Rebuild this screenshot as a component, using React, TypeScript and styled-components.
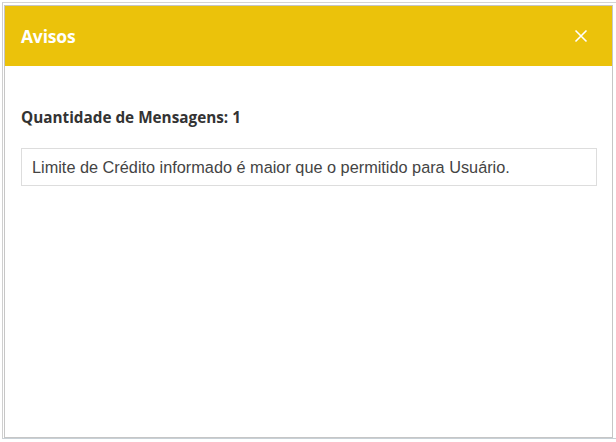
import React from 'react'
import styled, { createGlobalStyle } from 'styled-components'

const GlobalStyle = createGlobalStyle`
  html, body {
    margin: 0;
    padding: 0;
    background: #ffffff;
  }
  body {
    font-family: "Open Sans", "Noto Sans", Arial, sans-serif;
  }
`

const Page = styled.div`
  width: 616px;
  height: 442px;
  padding: 2px 0 0 2px;
  box-sizing: border-box;
  overflow: hidden;
`

const Backdrop = styled.div`
  height: 437px;
  border-top: 1px solid #d4d4d4;
  border-left: 1px solid #cfcfcf;
  border-bottom: 1px solid #c8d0d6;
  box-sizing: border-box;
  padding: 2px 2px 0 1px;
`

const Dialog = styled.div`
  width: 609px;
  height: 433px;
  box-sizing: border-box;
  border: 1px solid #c6c6c6;
  background: #ffffff;
  display: flex;
  flex-direction: column;
`

const Header = styled.div`
  height: 60px;
  flex: none;
  background: #ebc20b;
  display: flex;
  align-items: center;
  justify-content: space-between;
  padding: 0 24px 0 16px;
`

const Title = styled.h2`
  margin: 0;
  color: #ffffff;
  font-size: 17.5px;
  font-weight: 700;
  letter-spacing: -0.2px;
`

const CloseButton = styled.button`
  border: 0;
  background: transparent;
  padding: 0;
  width: 14px;
  height: 14px;
  display: flex;
  cursor: pointer;
`

const Body = styled.div`
  padding: 41px 15px 0 16px;
  display: flex;
  flex-direction: column;
  gap: 21px;
`

const Count = styled.div`
  color: #333333;
  font-size: 15.3px;
  font-weight: 700;
  line-height: 20px;
`

const Message = styled.div`
  border: 1px solid #dddddd;
  height: 38px;
  box-sizing: border-box;
  display: flex;
  align-items: center;
  padding: 0 10px;
  color: #444444;
  font-family: "Liberation Sans", Arial, sans-serif;
  font-size: 16.3px;
`

export default function App() {
  return (
    <>
      <GlobalStyle />
      <Page>
        <Backdrop>
          <Dialog>
            <Header>
              <Title>Avisos</Title>
              <CloseButton aria-label="Fechar">
                <svg width="14" height="14" viewBox="0 0 14 14">
                  <path d="M1.5 1.5 L12.5 12.5 M12.5 1.5 L1.5 12.5" stroke="#ffffff" strokeWidth="1.6" />
                </svg>
              </CloseButton>
            </Header>
            <Body>
              <Count>Quantidade de Mensagens: 1</Count>
              <Message>Limite de Crédito informado é maior que o permitido para Usuário.</Message>
            </Body>
          </Dialog>
        </Backdrop>
      </Page>
    </>
  )
}
